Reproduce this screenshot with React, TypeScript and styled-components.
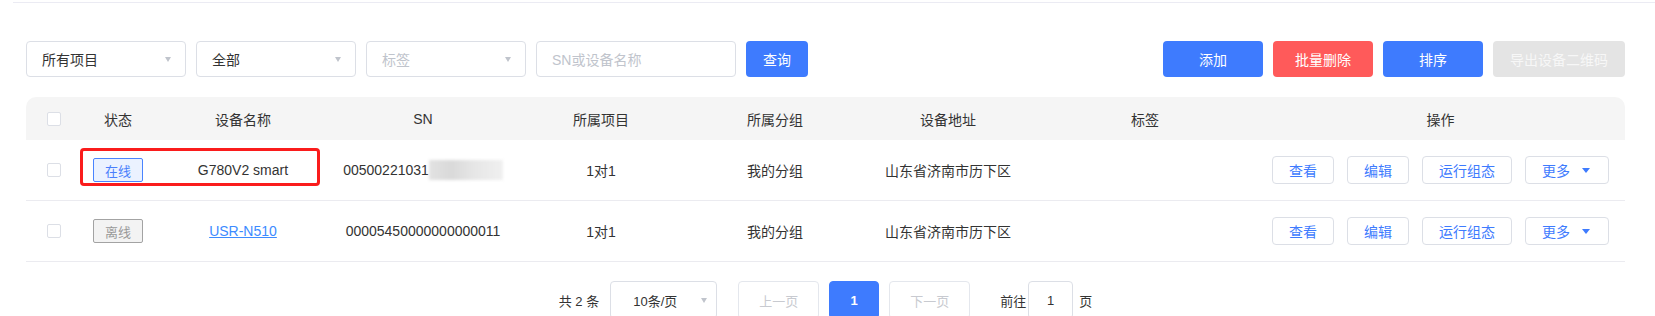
import styled, { createGlobalStyle } from "styled-components";

const GlobalStyle = createGlobalStyle`
  body {
    margin: 0;
    background: #fff;
    font-family: "Liberation Sans", "Noto Sans CJK SC", sans-serif;
    font-size: 14px;
    color: #333;
  }
`;

const COLUMNS = "56px 72px 178px 182px 174px 174px 172px 222px 1fr";

const Page = styled.div`
  width: 1655px;
  height: 316px;
  overflow: hidden;
`;

const TopRule = styled.div`
  margin-left: 13px;
  height: 2px;
  border-bottom: 1px solid #ebebf3;
`;

const Content = styled.div`
  padding: 38px 30px 0 26px;
`;

const Toolbar = styled.div`
  display: flex;
  justify-content: space-between;
  align-items: center;
  height: 36px;
  margin-bottom: 20px;
`;

const Group = styled.div`
  display: flex;
  align-items: center;
  gap: 10px;
`;

const SelectBox = styled.div<{ $w: number; $muted?: boolean }>`
  box-sizing: border-box;
  width: ${(p) => p.$w}px;
  height: 36px;
  border: 1px solid #dcdfe6;
  border-radius: 4px;
  padding: 0 14px 0 15px;
  display: flex;
  align-items: center;
  justify-content: space-between;
  color: ${(p) => (p.$muted ? "#c0c4cc" : "#333")};
  font-size: 14px;
`;

const Caret = styled.span<{ $color?: string; $size?: number }>`
  width: 0;
  height: 0;
  border-left: ${(p) => (p.$size || 7) / 2}px solid transparent;
  border-right: ${(p) => (p.$size || 7) / 2}px solid transparent;
  border-top: 5px solid ${(p) => p.$color || "#c0c4cc"};
`;

const Button = styled.button<{ $kind: "primary" | "danger" | "disabled"; $w: number }>`
  width: ${(p) => p.$w}px;
  height: 36px;
  border: none;
  border-radius: 4px;
  font-family: inherit;
  font-size: 14px;
  background: ${(p) =>
    p.$kind === "primary" ? "#3e7bfe" : p.$kind === "danger" ? "#ff5a5a" : "#e4e4e4"};
  color: ${(p) => (p.$kind === "disabled" ? "#f7f7f7" : "#fff")};
  padding: 0;
`;

const Table = styled.div`
  width: 1599px;
`;

const HeadRow = styled.div`
  display: grid;
  grid-template-columns: ${COLUMNS};
  height: 43px;
  background: #f5f5f5;
  border-radius: 10px 10px 0 0;
  color: #333;
`;

const Row = styled.div`
  position: relative;
  display: grid;
  grid-template-columns: ${COLUMNS};
  height: 60px;
  border-bottom: 1px solid #ebebf0;
`;

const Cell = styled.div`
  display: flex;
  align-items: center;
  justify-content: center;
  white-space: nowrap;
`;

const Actions = styled(Cell)`
  gap: 13px;
`;

const Checkbox = styled.span`
  box-sizing: border-box;
  width: 14px;
  height: 14px;
  border: 1px solid #dcdfe6;
  border-radius: 2px;
  background: #fff;
`;

const StatusTag = styled.span<{ $online: boolean }>`
  box-sizing: border-box;
  width: 50px;
  height: 24px;
  display: flex;
  align-items: center;
  justify-content: center;
  border-radius: 2px;
  font-size: 13px;
  border: 1px solid ${(p) => (p.$online ? "#4a84ff" : "#a3a3a3")};
  background: ${(p) => (p.$online ? "#ebf2ff" : "#f3f3f3")};
  color: ${(p) => (p.$online ? "#4a7ffc" : "#999")};
`;

const DeviceLink = styled.a`
  color: #3d8bff;
  text-decoration: underline;
`;

const Blurred = styled.span`
  display: inline-block;
  width: 74px;
  height: 20px;
  vertical-align: middle;
  background: linear-gradient(90deg, #e2e2e2 0%, #d9d9d9 30%, #e6e6e6 60%, #f0f0f0 100%);
  filter: blur(1.5px);
`;

const Highlight = styled.div`
  position: absolute;
  left: 54px;
  top: 8px;
  width: 240px;
  height: 38px;
  box-sizing: border-box;
  border: 3px solid #fa1c1c;
  border-radius: 4px;
  pointer-events: none;
`;

const ActionButton = styled.button`
  box-sizing: border-box;
  height: 28px;
  padding: 0 16px;
  display: flex;
  align-items: center;
  gap: 12px;
  border: 1px solid #dcdfe6;
  border-radius: 4px;
  background: #fff;
  color: #3e7bfe;
  font-family: inherit;
  font-size: 14px;
`;

const MoreButton = styled(ActionButton)`
  padding: 0 18px 0 16px;
`;

const Pagination = styled.div`
  margin-top: 19px;
  display: flex;
  justify-content: center;
  align-items: center;
  height: 38px;
  color: #606266;
  font-size: 13px;
`;

const Total = styled.span`
  margin-right: 11px;
  color: #333;
`;

const PageSize = styled.div`
  box-sizing: border-box;
  width: 107px;
  height: 38px;
  border: 1px solid #dcdfe6;
  border-radius: 4px;
  padding: 0 9px 0 22px;
  display: flex;
  align-items: center;
  justify-content: space-between;
  color: #333;
  margin-right: 21px;
`;

const PageButton = styled.button<{ $active?: boolean; $w: number }>`
  box-sizing: border-box;
  width: ${(p) => p.$w}px;
  height: 38px;
  border-radius: 4px;
  border: 1px solid ${(p) => (p.$active ? "#3e7bfe" : "#e4e7ed")};
  background: ${(p) => (p.$active ? "#3e7bfe" : "#fff")};
  color: ${(p) => (p.$active ? "#fff" : "#c8cad0")};
  font-weight: ${(p) => (p.$active ? 700 : 400)};
  font-family: inherit;
  font-size: 13px;
  padding: 0;
`;

const PagerNumbers = styled.div`
  display: flex;
  align-items: center;
  gap: 10px;
`;

const Jumper = styled.div`
  display: flex;
  align-items: center;
  margin-left: 30px;
  color: #333;
  gap: 2px;
`;

const JumpInput = styled.div`
  box-sizing: border-box;
  width: 45px;
  height: 38px;
  border: 1px solid #dcdfe6;
  border-radius: 4px;
  display: flex;
  align-items: center;
  justify-content: center;
  margin-right: 4px;
`;

const devices = [
  { online: true, name: "G780V2 smart", sn: "00500221031", hidden: true, project: "1对1", group: "我的分组", addr: "山东省济南市历下区" },
  { online: false, name: "USR-N510", sn: "00005450000000000011", hidden: false, project: "1对1", group: "我的分组", addr: "山东省济南市历下区" },
];

const App = () => (
  <Page>
    <GlobalStyle />
    <TopRule />
    <Content>
      <Toolbar>
        <Group>
          <SelectBox $w={160}>所有项目<Caret /></SelectBox>
          <SelectBox $w={160}>全部<Caret /></SelectBox>
          <SelectBox $w={160} $muted>标签<Caret /></SelectBox>
          <SelectBox $w={200} $muted>SN或设备名称</SelectBox>
          <Button $kind="primary" $w={62}>查询</Button>
        </Group>
        <Group>
          <Button $kind="primary" $w={100}>添加</Button>
          <Button $kind="danger" $w={100}>批量删除</Button>
          <Button $kind="primary" $w={100}>排序</Button>
          <Button $kind="disabled" $w={132}>导出设备二维码</Button>
        </Group>
      </Toolbar>

      <Table>
        <HeadRow>
          <Cell><Checkbox /></Cell>
          <Cell>状态</Cell>
          <Cell>设备名称</Cell>
          <Cell>SN</Cell>
          <Cell>所属项目</Cell>
          <Cell>所属分组</Cell>
          <Cell>设备地址</Cell>
          <Cell>标签</Cell>
          <Cell>操作</Cell>
        </HeadRow>
        {devices.map((d, i) => (
          <Row key={i}>
            <Cell><Checkbox /></Cell>
            <Cell><StatusTag $online={d.online}>{d.online ? "在线" : "离线"}</StatusTag></Cell>
            <Cell>{d.online ? d.name : <DeviceLink>{d.name}</DeviceLink>}</Cell>
            <Cell>{d.sn}{d.hidden && <Blurred />}</Cell>
            <Cell>{d.project}</Cell>
            <Cell>{d.group}</Cell>
            <Cell>{d.addr}</Cell>
            <Cell />
            <Actions>
              <ActionButton>查看</ActionButton>
              <ActionButton>编辑</ActionButton>
              <ActionButton>运行组态</ActionButton>
              <MoreButton>更多<Caret $color="#3e7bfe" $size={9} /></MoreButton>
            </Actions>
            {i === 0 && <Highlight />}
          </Row>
        ))}
      </Table>

      <Pagination>
        <Total>共 2 条</Total>
        <PageSize>10条/页<Caret /></PageSize>
        <PagerNumbers>
          <PageButton $w={81}>上一页</PageButton>
          <PageButton $w={50} $active>1</PageButton>
          <PageButton $w={81}>下一页</PageButton>
        </PagerNumbers>
        <Jumper>
          前往
          <JumpInput>1</JumpInput>
          页
        </Jumper>
      </Pagination>
    </Content>
  </Page>
);

export default App;
